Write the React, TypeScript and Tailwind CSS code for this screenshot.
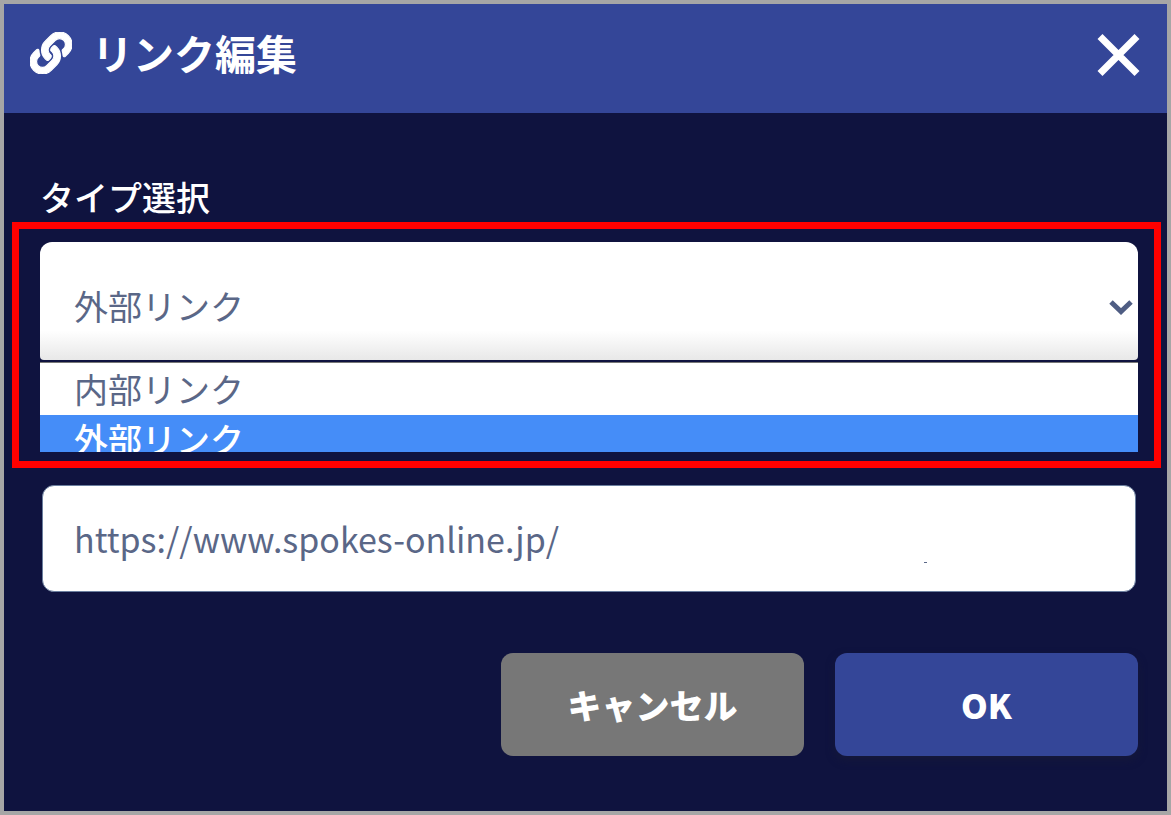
import { useState } from "react";
import { FaLink } from "react-icons/fa";

const linkTypes = ["内部リンク", "外部リンク"];

export default function App() {
  const [linkType, setLinkType] = useState("外部リンク");
  const [url, setUrl] = useState("https://www.spokes-online.jp/");

  return (
    <div
      role="dialog"
      aria-labelledby="dialog-title"
      className="flex min-h-screen flex-col border-4 border-[#a6a6a6] bg-[#0f133f] font-['Noto_Sans_CJK_JP',sans-serif] text-[34px] text-white"
    >
      <header className="flex items-center justify-between bg-[#344698] pt-4 pr-6 pb-7 pl-[26px]">
        <div className="flex items-center gap-5">
          <FaLink className="size-[42px]" stroke="currentColor" strokeWidth="14" aria-hidden="true" />
          <h1 id="dialog-title" className="text-[41px] leading-[65px] font-bold">
            リンク編集
          </h1>
        </div>
        <button type="button" aria-label="閉じる" className="size-[50px]">
          <svg viewBox="0 0 50 50" className="size-full" fill="none" stroke="currentColor" strokeWidth="7">
            <path d="M7 8.500 44 45.500M44 8.500 7 45.500" />
          </svg>
        </button>
      </header>

      <form className="flex flex-col pt-[60px]" onSubmit={(e) => e.preventDefault()}>
        <label htmlFor="link-type" className="mb-px px-9 leading-[48px] font-medium">
          タイプ選択
        </label>

        <div className="ml-2 mr-[6px] flex flex-col border-7 border-[#ff0000] pt-[13px] pr-4 pb-[9px] pl-[21px]">
          <div className="grid items-center text-[#5a6787]">
            <select
              id="link-type"
              value={linkType}
              onChange={(e) => setLinkType(e.target.value)}
              className="col-start-1 row-start-1 h-[118px] w-full appearance-none rounded-t-xl rounded-b-sm bg-linear-to-b from-white from-75% to-[#e8e8e8] px-[34px] pt-2 outline-none"
            >
              {linkTypes.map((name) => (
                <option key={name}>{name}</option>
              ))}
            </select>
            <svg
              viewBox="0 0 24 16"
              className="pointer-events-none col-start-1 row-start-1 mt-3 mr-[5px] h-4 w-6 justify-self-end"
              fill="none"
              stroke="#4f5d83"
              strokeWidth="5"
              aria-hidden="true"
            >
              <path d="M2 3 12 12.500 22 3" />
            </svg>
          </div>
          <ul
            role="listbox"
            aria-label="タイプ選択"
            className="mt-[2px] h-[90px] overflow-hidden border-t border-[#777777] bg-white"
          >
            {linkTypes.map((name) => (
              <li
                key={name}
                role="option"
                aria-selected={name === linkType}
                onClick={() => setLinkType(name)}
                className="px-[34px] leading-[52px] text-[#5a6787] aria-selected:bg-[#458df8] aria-selected:leading-[48px] aria-selected:font-medium aria-selected:text-white"
              >
                {name}
              </li>
            ))}
          </ul>
        </div>

        <div className="relative mt-[17px] mr-[31px] ml-[38px]">
          <input
            type="text"
            aria-label="リンク先URL"
            value={url}
            onChange={(e) => setUrl(e.target.value)}
            className="h-[107px] w-full rounded-xl border border-[#6b7f9f] bg-white px-[31px] text-[#5a6787] outline-none"
          />
          <span className="absolute right-[209px] bottom-[29px] h-px w-[3px] bg-[#5a6787]" />
        </div>

        <div className="mt-[61px] mr-[29px] mb-[55px] ml-9 flex justify-end gap-[31px] font-black">
          <button type="button" className="h-[103px] w-[303px] rounded-xl bg-[#777777]">
            キャンセル
          </button>
          <button type="submit" className="h-[103px] w-[303px] rounded-xl bg-[#344698] shadow-[0_4px_8px_#15183a]">
            OK
          </button>
        </div>
      </form>
    </div>
  );
}
